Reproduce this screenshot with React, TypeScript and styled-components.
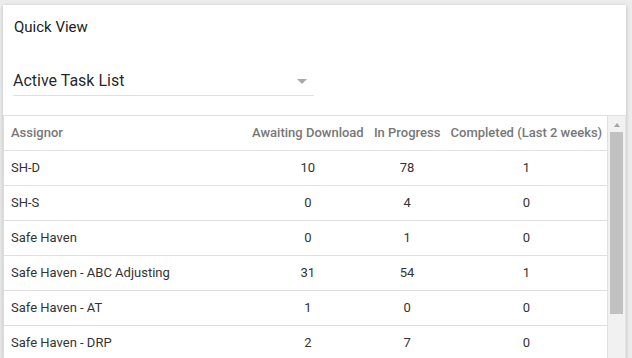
import styled, { createGlobalStyle } from 'styled-components';

const GlobalStyle = createGlobalStyle`
  html, body {
    margin: 0;
    padding: 0;
    background: #ececec;
    font-family: Roboto, "Noto Sans", Arial, sans-serif;
    overflow: hidden;
  }
`;

const Page = styled.div`
  padding: 5px 6px 0 3px;
  height: 353px;
  overflow: hidden;
`;

const Card = styled.section`
  background: #fff;
  box-shadow: 0 1px 4px rgba(0, 0, 0, 0.22);
  height: 420px;
  display: flex;
  flex-direction: column;
`;

const Title = styled.h2`
  margin: 0;
  padding: 12px 11px 0;
  font-size: 15px;
  line-height: 20px;
  font-weight: 400;
  color: #212121;
`;

const SelectField = styled.div`
  margin: 32px 0 0 10px;
  width: 301px;
  display: flex;
  align-items: center;
  justify-content: space-between;
  padding-bottom: 2px;
  border-bottom: 1px solid #e0e0e0;
  font-size: 16px;
  line-height: 24px;
  color: rgba(0, 0, 0, 0.87);
`;

const Caret = styled.span`
  width: 0;
  height: 0;
  margin-right: 7px;
  border-left: 5px solid transparent;
  border-right: 5px solid transparent;
  border-top: 5px solid #a8a8a8;
`;

const TableFrame = styled.div`
  margin-top: 19px;
  display: flex;
  border-top: 1px solid #e0e0e0;
  flex: 1;
  min-height: 0;
`;

const Table = styled.table`
  flex: 1;
  border-collapse: collapse;
  table-layout: fixed;
  align-self: flex-start;
  border-left: 1px solid #dcdcdc;
  border-right: 1px solid #e0e0e0;
`;

const Row = styled.tr<{ $head?: boolean }>`
  height: ${p => (p.$head ? 34 : 35)}px;
  border-bottom: 1px solid #e0e0e0;
`;

const HeadCell = styled.th<{ $w: number; $left?: boolean }>`
  width: ${p => p.$w}px;
  padding: ${p => (p.$left ? '0 0 0 7px' : '0')};
  text-align: ${p => (p.$left ? 'left' : 'center')};
  font-size: 13px;
  font-weight: 500;
  color: #777;
  white-space: nowrap;
`;

const Cell = styled.td<{ $left?: boolean }>`
  padding: ${p => (p.$left ? '0 0 0 7px' : '0')};
  text-align: ${p => (p.$left ? 'left' : 'center')};
  font-size: 13px;
  color: #333;
  white-space: nowrap;
`;

const ScrollTrack = styled.div`
  width: 17px;
  background: #f1f1f1;
  display: flex;
  flex-direction: column;
  align-items: center;
  border-right: 1px solid #e4e4e4;
`;

const ArrowUp = styled.span`
  margin-top: 7px;
  width: 0;
  height: 0;
  border-left: 3.5px solid transparent;
  border-right: 3.5px solid transparent;
  border-bottom: 4px solid #a3a3a3;
`;

const Thumb = styled.div`
  margin-top: 5px;
  width: 13px;
  height: 182px;
  background: #c1c1c1;
`;

const rows: [string, number, number, number][] = [
  ['SH-D', 10, 78, 1],
  ['SH-S', 0, 4, 0],
  ['Safe Haven', 0, 1, 0],
  ['Safe Haven - ABC Adjusting', 31, 54, 1],
  ['Safe Haven - AT', 1, 0, 0],
  ['Safe Haven - DRP', 2, 7, 0],
];

const App = () => {
  return (
    <>
      <GlobalStyle />
      <Page>
        <Card>
          <Title>Quick View</Title>
          <SelectField>
            Active Task List
            <Caret />
          </SelectField>
          <TableFrame>
            <Table>
              <thead>
                <Row $head>
                  <HeadCell $w={242} $left>Assignor</HeadCell>
                  <HeadCell $w={122}>Awaiting Download</HeadCell>
                  <HeadCell $w={78}>In Progress</HeadCell>
                  <HeadCell $w={162}>Completed (Last 2 weeks)</HeadCell>
                </Row>
              </thead>
              <tbody>
                {rows.map(([name, a, b, c]) => (
                  <Row key={name}>
                    <Cell $left>{name}</Cell>
                    <Cell>{a}</Cell>
                    <Cell>{b}</Cell>
                    <Cell>{c}</Cell>
                  </Row>
                ))}
              </tbody>
            </Table>
            <ScrollTrack>
              <ArrowUp />
              <Thumb />
            </ScrollTrack>
          </TableFrame>
        </Card>
      </Page>
    </>
  );
};

export default App;
